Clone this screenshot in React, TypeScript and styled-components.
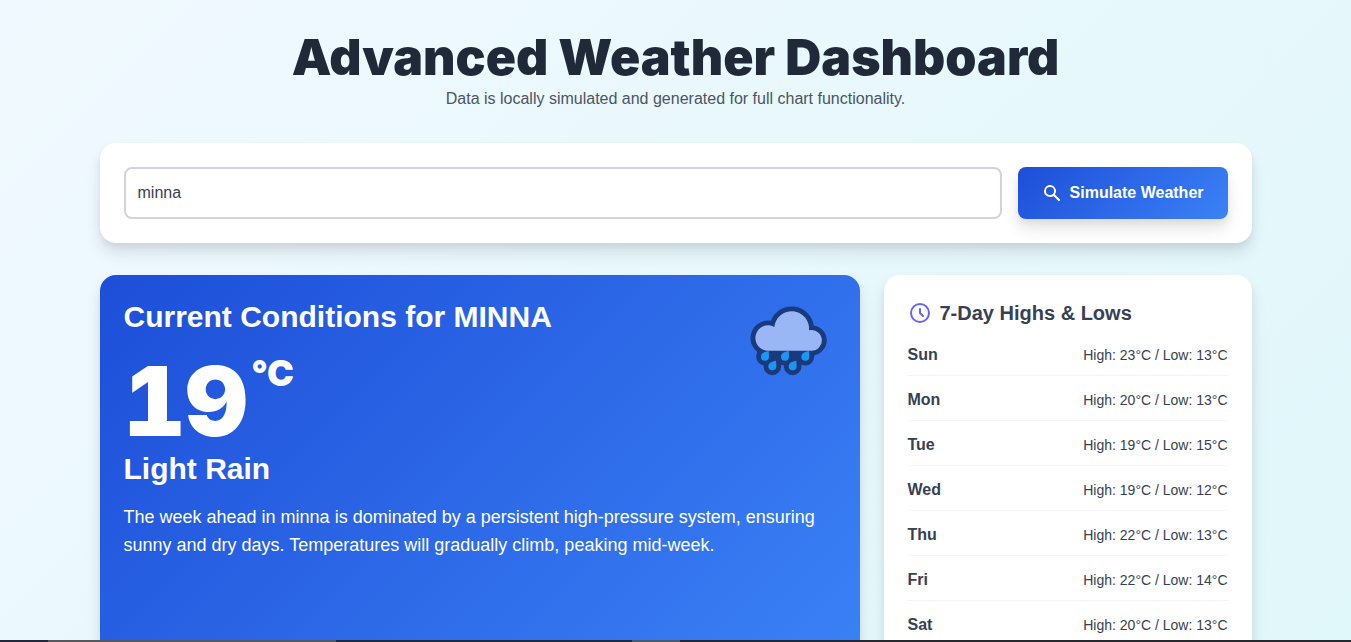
import React, { useState } from "react";
import styled, { createGlobalStyle } from "styled-components";

const GlobalStyle = createGlobalStyle`
  *, *::before, *::after { box-sizing: border-box; }
  html, body { margin: 0; height: 100%; }
  body { font-family: "Liberation Sans", Arial, sans-serif; color: #374151; }
  h1, h2, h3, p, ul { margin: 0; padding: 0; }
  button, input { font: inherit; }
`;

const displayFont = `"Arial Black", Inter, "Liberation Sans", sans-serif`;
const blueGradient = "linear-gradient(135deg, #1d4ed8 0%, #3b82f6 100%)";

const Viewport = styled.div`
  height: 100vh;
  overflow-y: auto;
  scrollbar-width: none;
`;

const Page = styled.main`
  min-height: 100%;
  padding: 32px;
  background: linear-gradient(135deg, #f0f9ff 0%, #e0f7fa 100%);
`;

const Container = styled.div`
  max-width: 1152px;
  margin: 0 auto;
  display: flex;
  flex-direction: column;
  gap: 32px;
`;

const Header = styled.header`
  text-align: center;
`;

const Title = styled.h1`
  margin-bottom: 4px;
  font-family: ${displayFont};
  font-size: 50px;
  font-weight: 900;
  line-height: 51px;
  color: #1f2937;
`;

const Subtitle = styled.p`
  font-size: 16px;
  line-height: 24px;
  color: #4b5563;
`;

const Card = styled.section`
  padding: 24px;
  border-radius: 16px;
  background: #fff;
  box-shadow: 0 10px 15px rgba(0, 0, 0, 0.1), 0 4px 6px rgba(0, 0, 0, 0.05);
`;

const SearchForm = styled.form`
  display: flex;
  gap: 16px;
`;

const CityInput = styled.input`
  flex: 1;
  min-width: 0;
  height: 52px;
  padding: 0 12px;
  border: 2px solid #d1d5db;
  border-radius: 8px;
  background: #fff;
  font-size: 16px;
  color: #374151;
  outline: none;

  &:focus { border-color: #3b82f6; }
`;

const SubmitButton = styled.button`
  display: flex;
  align-items: center;
  gap: 8px;
  padding: 0 24px;
  border: 0;
  border-radius: 8px;
  background: ${blueGradient};
  box-shadow: 0 10px 15px rgba(0, 0, 0, 0.1), 0 4px 6px rgba(0, 0, 0, 0.05);
  color: #fff;
  font-size: 16px;
  font-weight: 700;
  cursor: pointer;
`;

const Columns = styled.div`
  display: grid;
  grid-template-columns: repeat(3, minmax(0, 1fr));
  gap: 24px;
`;

const CurrentCard = styled(Card)`
  grid-column: span 2;
  background: ${blueGradient};
  color: #fff;
`;

const CurrentTop = styled.div`
  display: flex;
  justify-content: space-between;
  align-items: flex-start;
`;

const CurrentTitle = styled.h2`
  font-size: 30px;
  line-height: 36px;
  font-weight: 700;
`;

const Temperature = styled.p`
  display: flex;
  align-items: flex-start;
  gap: 4px;
  margin-top: 16px;
  font-family: ${displayFont};
  font-variant-numeric: tabular-nums;
  font-size: 96px;
  font-weight: 900;
  line-height: 100px;
`;

const Unit = styled.span`
  font-size: 36px;
  line-height: 44px;
`;

const Condition = styled.p`
  font-size: 30px;
  line-height: 36px;
  font-weight: 700;
`;

const Summary = styled.p`
  margin-top: 16px;
  font-size: 18px;
  line-height: 28px;
`;

const ListTitle = styled.h3`
  display: flex;
  align-items: center;
  gap: 8px;
  margin-bottom: 16px;
  font-size: 20px;
  line-height: 28px;
  font-weight: 700;
`;

const DayList = styled.ul`
  display: flex;
  flex-direction: column;
  gap: 12px;
  list-style: none;
`;

const DayRow = styled.li`
  display: flex;
  justify-content: space-between;
  align-items: center;
  padding-bottom: 8px;
  border-bottom: 1px solid #f3f4f6;
  line-height: 24px;
`;

const DayName = styled.span`
  font-size: 16px;
  font-weight: 700;
`;

const DayRange = styled.span`
  font-size: 14px;
`;

const BottomBar = styled.div`
  position: fixed;
  left: 0;
  right: 0;
  bottom: 0;
  height: 2px;
  display: flex;
  background: #26282e;
`;

const BarSegment = styled.span<{ $width: number; $color: string }>`
  width: ${(p) => p.$width}px;
  background: ${(p) => p.$color};
`;

const RainIcon = styled.svg`
  width: 96px;
  height: 96px;
  margin-bottom: -60px;
  flex-shrink: 0;
`;

const days = [
  { name: "Sun", high: 23, low: 13 },
  { name: "Mon", high: 20, low: 13 },
  { name: "Tue", high: 19, low: 15 },
  { name: "Wed", high: 19, low: 12 },
  { name: "Thu", high: 22, low: 13 },
  { name: "Fri", high: 22, low: 14 },
  { name: "Sat", high: 20, low: 13 },
];

const drops = [[75, 183], [135, 183], [196, 183], [97, 212], [158, 212]];
const dropPath = "M11 -17 C11 -17 12 -6 12 0 A12 12 0 1 1 -12 0 C-12 -10 -2 -15 11 -17Z";
const cloudPath =
  "M85 165 A38 38 0 1 1 103 94 A52 52 0 0 1 207 104 A31 31 0 1 1 213 165Z";

function LightRainIcon() {
  return (
    <RainIcon viewBox="0 10 288 288" role="img" aria-label="Light rain">
      <g fill="#193a7c" stroke="#193a7c" strokeWidth="29" strokeLinejoin="round">
        <path d={cloudPath} />
        {drops.map(([x, y]) => (
          <path key={`${x}-${y}`} transform={`translate(${x} ${y})`} d={dropPath} />
        ))}
        <path d="M75 178H196V190L158 205H97Z" stroke="none" />
      </g>
      <path d={cloudPath} fill="#9ab7f5" />
      <g fill="#1c96f0">
        {drops.map(([x, y]) => (
          <path key={`${x}-${y}`} transform={`translate(${x} ${y})`} d={dropPath} />
        ))}
      </g>
    </RainIcon>
  );
}

export default function App() {
  const [query, setQuery] = useState("minna");
  const [city, setCity] = useState("minna");

  return (
    <Viewport>
      <GlobalStyle />
      <Page>
        <Container>
          <Header>
            <Title>Advanced Weather Dashboard</Title>
            <Subtitle>Data is locally simulated and generated for full chart functionality.</Subtitle>
          </Header>

          <Card>
            <SearchForm
              onSubmit={(e) => {
                e.preventDefault();
                setCity(query);
              }}
            >
              <CityInput
                aria-label="City"
                value={query}
                onChange={(e) => setQuery(e.target.value)}
              />
              <SubmitButton type="submit">
                <svg width="20" height="20" viewBox="0 0 20 20" fill="currentColor" aria-hidden="true">
                  <path
                    fillRule="evenodd"
                    clipRule="evenodd"
                    d="M8 4a4 4 0 100 8 4 4 0 000-8zM2 8a6 6 0 1110.89 3.476l4.817 4.817a1 1 0 01-1.414 1.414l-4.816-4.816A6 6 0 012 8z"
                  />
                </svg>
                Simulate Weather
              </SubmitButton>
            </SearchForm>
          </Card>

          <Columns>
            <CurrentCard>
              <CurrentTop>
                <CurrentTitle>{`Current Conditions for ${city.toUpperCase()}`}</CurrentTitle>
                <LightRainIcon />
              </CurrentTop>
              <Temperature>
                19<Unit>°C</Unit>
              </Temperature>
              <Condition>Light Rain</Condition>
              <Summary>
                {`The week ahead in ${city} is dominated by a persistent high-pressure system, ensuring sunny and dry days. Temperatures will gradually climb, peaking mid-week.`}
              </Summary>
            </CurrentCard>

            <Card>
              <ListTitle>
                <svg
                  width="24"
                  height="24"
                  viewBox="0 0 24 24"
                  fill="none"
                  stroke="#6366f1"
                  strokeWidth="2"
                  strokeLinecap="round"
                  strokeLinejoin="round"
                  aria-hidden="true"
                >
                  <path d="M12 8v4l3 3m6-3a9 9 0 11-18 0 9 9 0 0118 0z" />
                </svg>
                7-Day Highs &amp; Lows
              </ListTitle>
              <DayList>
                {days.map((d) => (
                  <DayRow key={d.name}>
                    <DayName>{d.name}</DayName>
                    <DayRange>{`High: ${d.high}°C / Low: ${d.low}°C`}</DayRange>
                  </DayRow>
                ))}
              </DayList>
            </Card>
          </Columns>
        </Container>
      </Page>
      <BottomBar aria-hidden="true">
        <BarSegment $width={48} $color="#22283a" />
        <BarSegment $width={288} $color="#57585c" />
        <BarSegment $width={296} $color="#222a38" />
        <BarSegment $width={48} $color="#4d5a64" />
      </BottomBar>
    </Viewport>
  );
}
